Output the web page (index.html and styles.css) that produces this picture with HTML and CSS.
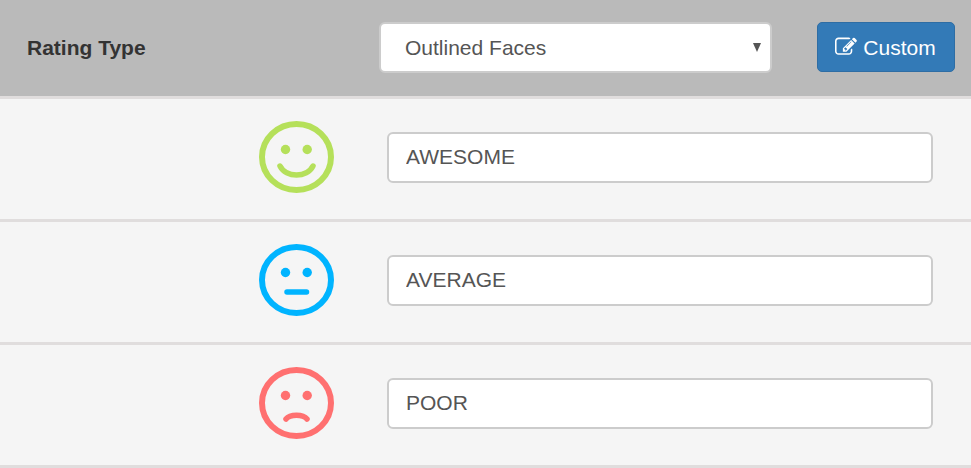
FILE: index.html
```html
<!DOCTYPE html>
<html lang="en">
<head>
    <meta charset="UTF-8">
    <meta name="viewport" content="width=device-width, initial-scale=1.0">
    <title>Rating Type</title>
    <link rel="stylesheet" href="styles.css">
</head>
<body>

    <div class="rating-header">
        <label class="rating-label" for="rating-type">Rating Type</label>
        <div class="select-wrap">
            <select id="rating-type">
                <option>Outlined Faces</option>
            </select>
        </div>
        <button class="custom-btn" type="button">
            <svg class="edit-icon" viewBox="0 0 1792 1792" aria-hidden="true"><path d="M888 1184l116-116-152-152-116 116v56h96v96h56zm440-720q-16-16-33 1l-350 350q-17 17-1 33t33-1l350-350q17-17 1-33zm80 594v190q0 119-84.500 203.500t-203.500 84.500h-832q-119 0-203.500-84.500t-84.500-203.500v-832q0-119 84.500-203.500t203.500-84.500h832q63 0 117 25 15 7 18 23 3 17-9 29l-49 49q-14 14-32 8-23-6-45-6h-832q-66 0-113 47t-47 113v832q0 66 47 113t113 47h832q66 0 113-47t47-113v-126q0-13 9-22l64-64q15-15 35-7t20 29zm-96-738l288 288-672 672h-288v-288zm444 132l-92 92-288-288 92-92q28-28 68-28t68 28l152 152q28 28 28 68t-28 68z"/></svg>
            Custom
        </button>
    </div>

    <div class="rating-row">
        <svg class="face face-good" viewBox="0 0 75 72" aria-hidden="true">
            <ellipse class="face-line" cx="37.5" cy="36" rx="34.500" ry="33"/>
            <circle class="face-eye" cx="26.500" cy="28.500" r="4.700"/>
            <circle class="face-eye" cx="48.200" cy="28.500" r="4.700"/>
            <path class="face-mouth" d="M21 45 C27 57 48 57 54 45"/>
        </svg>
        <input class="rating-input" type="text" value="AWESOME">
    </div>

    <div class="rating-row">
        <svg class="face face-ok" viewBox="0 0 75 72" aria-hidden="true">
            <ellipse class="face-line" cx="37.5" cy="36" rx="34.500" ry="33"/>
            <circle class="face-eye" cx="26.500" cy="28.500" r="4.700"/>
            <circle class="face-eye" cx="48.200" cy="28.500" r="4.700"/>
            <path class="face-mouth" d="M28 48 H47.500"/>
        </svg>
        <input class="rating-input" type="text" value="AVERAGE">
    </div>

    <div class="rating-row">
        <svg class="face face-bad" viewBox="0 0 75 72" aria-hidden="true">
            <ellipse class="face-line" cx="37.5" cy="36" rx="34.500" ry="33"/>
            <circle class="face-eye" cx="26.500" cy="28.500" r="4.700"/>
            <circle class="face-eye" cx="48.200" cy="28.500" r="4.700"/>
            <path class="face-mouth" d="M27 52 C31 47 44 47 48 52"/>
        </svg>
        <input class="rating-input" type="text" value="POOR">
    </div>

</body>
</html>
```

FILE: styles.css
```css
body {
    font-family: "Liberation Sans", Arial, sans-serif;
    background-color: #f5f5f5;
    color: #555;
    margin: 0;
    padding: 0;
}
.rating-header {
    display: flex;
    align-items: flex-start;
    height: 74px;
    padding: 22px 16px 0 27px;
    background: #bababa;
    border-bottom: 3px solid #e0dddd;
}
.rating-label {
    width: 352px;
    font-size: 21px;
    line-height: 52px;
    font-weight: bold;
    color: #333;
}
.select-wrap {
    position: relative;
    width: 393px;
    height: 51px;
    margin-right: 45px;
}
.select-wrap::after {
    content: "";
    position: absolute;
    right: 11px;
    top: 21px;
    border-left: 4.250px solid transparent;
    border-right: 4.250px solid transparent;
    border-top: 9px solid #555;
}
#rating-type {
    appearance: none;
    display: block;
    width: 100%;
    height: 100%;
    padding: 0 0 0 24px;
    background: #fff;
    border: 2px solid #ccc;
    border-radius: 6px;
    font: 21px "Liberation Sans", Arial, sans-serif;
    color: #555;
}
.custom-btn {
    display: flex;
    align-items: center;
    justify-content: center;
    gap: 6px;
    width: 138px;
    height: 50px;
    padding: 2px 1px 0 0;
    background: #337ab7;
    border: 1px solid #2e6da4;
    border-radius: 5px;
    color: #fff;
    font: 21px "Liberation Sans", Arial, sans-serif;
}
.edit-icon {
    width: 22px;
    height: 22px;
    margin-top: -2px;
    fill: #fff;
}
.rating-row {
    display: flex;
    align-items: center;
    height: 120px;
    padding-left: 259px;
    border-bottom: 3px solid #e0dddd;
}
.face {
    width: 75px;
    height: 72px;
    margin: -4px 53px 0 0;
    flex: none;
}
.face-line {
    fill: none;
    stroke: currentColor;
    stroke-width: 6px;
}
.face-eye {
    fill: currentColor;
}
.face-mouth {
    fill: none;
    stroke: currentColor;
    stroke-width: 5.500px;
    stroke-linecap: round;
}
.face-good {
    color: #b5e05a;
}
.face-ok {
    color: #00b4ff;
}
.face-bad {
    color: #ff7070;
}
.rating-input {
    width: 546px;
    height: 51px;
    box-sizing: border-box;
    margin-top: -4px;
    padding: 0 17px;
    background: #fff;
    border: 2px solid #ccc;
    border-radius: 6px;
    font: 21px "Liberation Sans", Arial, sans-serif;
    color: #555;
}
```
